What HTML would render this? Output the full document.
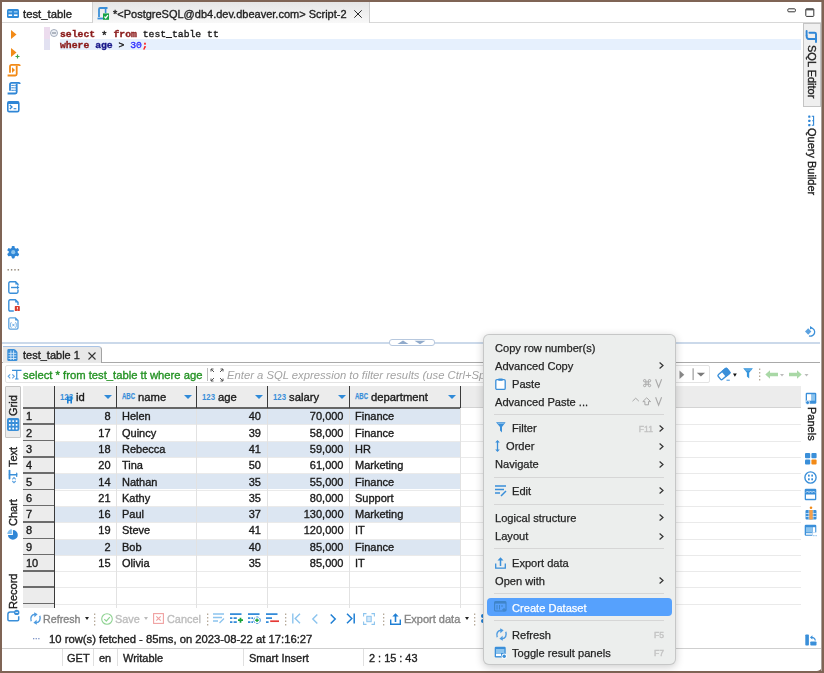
<!DOCTYPE html>
<html><head><meta charset="utf-8">
<style>
*{margin:0;padding:0;box-sizing:border-box}
html,body{width:824px;height:673px;overflow:hidden;background:#7f6455}
body{position:relative;font-family:"Liberation Sans",sans-serif;font-size:11px;color:#1f1f1f}
.a{position:absolute}
.t{position:absolute;white-space:nowrap;line-height:1}
svg{position:absolute;overflow:visible}
.mono{font-family:"Liberation Mono",monospace}
.vr{transform-origin:0 0;transform:rotate(90deg)}
.vl{transform-origin:0 0;transform:rotate(-90deg)}
.t,.mi,.sc{will-change:transform;-webkit-text-stroke:0.35px currentColor}
.ph{-webkit-text-stroke:0 !important}
.mi{-webkit-text-stroke:0.25px currentColor}
.g{font-size:11.25px}
.r{text-align:right}
.mi{position:absolute;white-space:nowrap;line-height:1;font-size:11.1px;color:#222}
.sc{position:absolute;white-space:nowrap;line-height:1;font-size:10.5px;color:#b4b4b4;text-align:right}
</style></head><body>
<div class="a" style="left:2px;top:2px;width:820px;height:669px;background:#fff;border-bottom-right-radius:5px"></div>
<!-- ===== TOP TAB BAR ===== -->
<div class="a" style="left:2px;top:22px;width:820px;height:1px;background:#d8d8d8"></div>
<div class="a" style="left:92px;top:2px;width:1px;height:21px;background:#d0d0d0"></div>
<div class="a" style="left:93px;top:2px;width:275.5px;height:21px;background:linear-gradient(#e6e6e6,#f8f8f8)"></div>
<div class="a" style="left:368.5px;top:2px;width:1px;height:21px;background:#cdcdcd"></div>
<svg style="left:7px;top:9px" width="12" height="9" viewBox="0 0 12 9"><rect x="0" y="0" width="12" height="9" rx="1.5" fill="#2f8ad8"/><rect x="1.5" y="2" width="3.6" height="1.6" fill="#8cc4ee"/><rect x="6.9" y="2" width="3.6" height="1.6" fill="#8cc4ee"/><rect x="1.5" y="5.4" width="3.6" height="1.6" fill="#fff"/><rect x="6.9" y="5.4" width="3.6" height="1.6" fill="#fff"/></svg>
<div class="t" style="left:22.5px;top:8.5px;font-size:11.3px">test_table</div>
<svg style="left:97px;top:7px" width="12" height="13" viewBox="0 0 12 13"><path d="M2 10V2.2Q2 1 3.2 1H10.5" stroke="#3a8fd9" stroke-width="1.8" fill="none"/><path d="M8.6 1.5V6" stroke="#3a8fd9" stroke-width="1.6"/><path d="M0.5 11.5H6" stroke="#3a8fd9" stroke-width="1.8"/><rect x="6" y="6.4" width="6" height="6.4" fill="#17a245"/><path d="M7.4 9.6l1.3 1.3 2.2-2.8" stroke="#fff" stroke-width="1.3" fill="none"/></svg>
<div class="t" style="left:113px;top:8.5px">*&lt;PostgreSQL@db4.dev.dbeaver.com&gt; Script-2</div>
<svg style="left:354px;top:10px" width="8" height="8" viewBox="0 0 8 8"><path d="M0.3 0.3l7.4 7.4M7.7 0.3l-7.4 7.4" stroke="#2a2a2a" stroke-width="1"/></svg>
<!-- min / max -->
<svg style="left:787px;top:8px" width="28" height="10" viewBox="0 0 28 10"><rect x="0.8" y="0.8" width="7.6" height="3" rx="1" stroke="#333" stroke-width="1" fill="#fff"/><rect x="18.8" y="0.8" width="8" height="7.6" rx="0.8" stroke="#333" stroke-width="1" fill="#fff"/><rect x="18.8" y="0.8" width="8" height="1.6" fill="#555"/></svg>

<!-- ===== EDITOR ===== -->
<div id="editor"></div>
<!-- left icons -->
<svg style="left:11px;top:30px" width="6" height="9" viewBox="0 0 6 9"><path d="M0 0L5.5 4.5L0 9Z" fill="#f28a17"/></svg>
<svg style="left:11px;top:48px" width="9" height="11" viewBox="0 0 9 11"><path d="M0 0L5.5 4.5L0 9Z" fill="#f28a17"/><path d="M6.5 6.5v4M4.5 8.5h4" stroke="#43a047" stroke-width="1.2"/></svg>
<svg style="left:7px;top:64px" width="14" height="13" viewBox="0 0 14 13"><g stroke="#f28a17" stroke-width="1.8" fill="none"><path d="M3 8.8V2.4Q3 0.9 4.5 0.9H11.8Q12.8 0.9 12.8 2"/><path d="M9.7 1.7V10Q9.7 11.5 8.2 11.5H0.6"/></g><path d="M5 3.2L8 6.1L5 9Z" fill="#f28a17"/></svg>
<svg style="left:7px;top:82px" width="14" height="13" viewBox="0 0 14 13"><g stroke="#2f86d6" stroke-width="1.8" fill="none"><path d="M3 8.8V2.4Q3 0.9 4.5 0.9H11.8Q12.8 0.9 12.8 2"/><path d="M9.7 1.7V10Q9.7 11.5 8.2 11.5H0.6"/></g><g stroke="#2f86d6" stroke-width="1"><path d="M4.3 3.4H6.9M4.3 5.8H6.9M4.3 8.3H6.9"/></g><g fill="#2f86d6"><rect x="7.4" y="2.8" width="1.3" height="1.3"/><rect x="7.4" y="5.2" width="1.3" height="1.3"/><rect x="7.4" y="7.7" width="1.3" height="1.3"/></g></svg>
<svg style="left:7.4px;top:100.8px" width="13" height="12" viewBox="0 0 13 12"><rect x="0.8" y="0.8" width="11" height="9.8" rx="1.4" stroke="#2f86d6" stroke-width="1.6" fill="none"/><rect x="0.8" y="0.6" width="11" height="2.4" fill="#2f86d6"/><path d="M2.8 4L5 6L2.8 8" stroke="#2f86d6" stroke-width="1.3" fill="none"/><path d="M6.6 7.7H9.3" stroke="#2f86d6" stroke-width="1.1"/></svg>
<!-- lower left icons -->
<svg style="left:7px;top:246.2px" width="13" height="13" viewBox="0 0 13 13"><g fill="#2f86d6"><circle cx="6.2" cy="6.2" r="4.5"/><rect x="4.7" y="0" width="3" height="12.4" rx="0.8"/><rect x="4.7" y="0" width="3" height="12.4" rx="0.8" transform="rotate(60 6.2 6.2)"/><rect x="4.7" y="0" width="3" height="12.4" rx="0.8" transform="rotate(120 6.2 6.2)"/></g><circle cx="6.2" cy="6.2" r="2.1" fill="#8cc4ee"/></svg>
<svg style="left:7px;top:269px" width="13" height="2" viewBox="0 0 13 2"><g fill="#9a8f80"><rect x="0.5" y="0" width="1.4" height="1.6"/><rect x="3.9" y="0" width="1.4" height="1.6"/><rect x="7.3" y="0" width="1.4" height="1.6"/><rect x="10.7" y="0" width="1.4" height="1.6"/></g></svg>
<svg style="left:8px;top:280.5px" width="12" height="13" viewBox="0 0 12 13"><path d="M10 4.5V3.2L7.6 0.8H2.2Q0.8 0.8 0.8 2.2V10.8Q0.8 12.2 2.2 12.2H8.6Q10 12.2 10 10.8V8.5" stroke="#3a8fd9" stroke-width="1.4" fill="none"/><path d="M7.4 0.8V3.4H10" fill="#3a8fd9"/><path d="M3 6.5H9.5" stroke="#3a8fd9" stroke-width="1.4"/><path d="M9 4.6L11.4 6.5L9 8.4Z" fill="#3a8fd9"/></svg>
<svg style="left:8px;top:298.5px" width="12" height="13" viewBox="0 0 12 13"><path d="M5.8 12H2.2Q0.8 12 0.8 10.6V2.2Q0.8 0.8 2.2 0.8H7.4L10 3.4V6" stroke="#3a8fd9" stroke-width="1.4" fill="none"/><path d="M7.2 0.8V3.6H10Z" fill="#3a8fd9"/><rect x="6.8" y="7.1" width="5" height="5" rx="0.6" fill="#d93a2b"/><rect x="8.9" y="8" width="0.9" height="2" fill="#fff"/><rect x="8.9" y="10.6" width="0.9" height="0.8" fill="#fff"/></svg>
<svg style="left:8px;top:316.5px" width="12" height="13" viewBox="0 0 12 13"><path d="M10 3.4L7.4 0.8H2.2Q0.8 0.8 0.8 2.2V10.8Q0.8 12.2 2.2 12.2H8.6Q10 12.2 10 10.8Z" stroke="#5ca2e0" stroke-width="1.3" fill="none"/><path d="M7.2 0.8V3.6H10Z" fill="#3a8fd9"/><path d="M3.5 5.5Q2.6 5.5 2.6 6.7V7.4L2 8L2.6 8.6V9.4Q2.6 10.5 3.5 10.5M7.3 5.5Q8.2 5.5 8.2 6.7V7.4L8.8 8L8.2 8.6V9.4Q8.2 10.5 7.3 10.5M4.4 6.8L6.4 9.3M6.4 6.8L4.4 9.3" stroke="#5ca2e0" stroke-width="0.9" fill="none"/></svg>

<!-- ruler bars -->
<div class="a" style="left:44px;top:27px;width:6px;height:12px;background:#ecdcee"></div>
<div class="a" style="left:44px;top:39px;width:6px;height:11px;background:#e2e1f1"></div>
<svg style="left:50px;top:29px" width="8" height="8" viewBox="0 0 8 8"><circle cx="4" cy="4" r="3.5" fill="#eef1f6" stroke="#9aa4b4" stroke-width="0.9"/><path d="M2 4h4" stroke="#707a8a" stroke-width="1"/></svg>
<!-- current line -->
<div class="a" style="left:60px;top:39px;width:741px;height:11px;background:#e6f0fd"></div>
<div class="t mono" style="left:60px;top:28.5px;font-size:9.75px;line-height:11px;color:#1a1a1a"><b style="color:#8a1a1a">select</b> <span style="position:relative;top:2.2px;font-size:11px;line-height:0">*</span> <b style="color:#8a1a1a">from</b> test_table tt</div>
<div class="t mono" style="left:60px;top:39.5px;font-size:9.75px;line-height:11px;color:#1a1a1a"><b style="color:#8a1a1a">where</b> <b style="color:#1a1a8a">age</b> &gt; <span style="color:#3030ff">30</span><b style="color:#ff1a1a">;</b></div>

<!-- SQL Editor vertical tab -->
<div class="a" style="left:803px;top:23px;width:17.5px;height:84px;background:#efefef;border:1px solid #c4c4c4"></div>
<svg style="left:805px;top:30px" width="13" height="13" viewBox="0 0 13 13"><g stroke="#2f86d6" stroke-width="1.9" fill="none" stroke-linecap="round"><path d="M1.6 1V5.3"/><path d="M1.6 5.8Q1.6 9 3.8 9H11"/><path d="M4.4 2.7H9.6Q11 2.7 11 4.1V12"/></g></svg>
<div class="t vr" style="left:817px;top:44.5px">SQL Editor</div>
<svg style="left:808px;top:114.5px" width="7" height="11" viewBox="0 0 7 11"><g fill="#2f86d6"><rect x="0.2" y="0.5" width="2.2" height="2.2" rx="0.4"/><rect x="0.2" y="4.8" width="2.2" height="2.2" rx="0.4"/><rect x="0.2" y="9" width="2.2" height="2.2" rx="0.4"/></g><path d="M3.8 1.2H5.6V10.2H3.8M4.2 5.7H5.6" stroke="#2f86d6" stroke-width="1.1" fill="none"/></svg>
<div class="t vr" style="left:817px;top:127.5px">Query Builder</div>
<svg style="left:805px;top:326px" width="12" height="12" viewBox="0 0 12 12"><path d="M0 5.5L3.2 2.3L6.4 5.5L3.2 8.7Z" fill="#5ca2e0"/><path d="M6 1.8A4.2 4.2 0 1 1 4 9.9" stroke="#3a8fd9" stroke-width="1.3" fill="none"/><path d="M5 0L7.6 1.8L5 3.5Z" fill="#3a8fd9"/></svg>

<!-- ===== SASH ===== -->
<div class="a" style="left:2px;top:342px;width:818px;height:1.5px;background:#cbd9ea"></div>
<div class="a" style="left:389px;top:339px;width:46px;height:7px;background:#fff;border:1px solid #b7c8de;border-radius:3px"></div>
<svg style="left:397px;top:340px" width="30" height="5" viewBox="0 0 30 5"><path d="M0.5 4L6 0.5L11.5 4Z" fill="#90aacb"/><path d="M17.5 0.8L23 4.2L28.5 0.8Z" fill="#90aacb"/></svg>

<!-- ===== RESULTS TAB ===== -->
<div class="a" style="left:2px;top:361.8px;width:818px;height:1px;background:#a9a9a9"></div>
<div class="a" style="left:3px;top:346px;width:99px;height:16.8px;background:#e8e8e8;border-top:1px solid #a9c4e6;border-right:1px solid #a3a3a3;border-top-right-radius:4px"></div>
<svg style="left:7.2px;top:348.6px" width="11" height="12" viewBox="0 0 11 12"><path d="M0.3 1.4Q0.3 0 1.6 0H6.8Q7.6 0 8.2 0.6L9.9 2.3Q10.5 2.9 10.5 3.7V10.7Q10.5 12 9.2 12H1.6Q0.3 12 0.3 10.7Z" fill="#3a8fd9"/><g stroke="#d6eafb" stroke-width="0.9"><path d="M1.5 4.3H9.3M1.5 6.9H9.3M1.5 9.5H9.3M3.9 1.5V11M6.6 1.5V11"/></g></svg>
<div class="t" style="left:22.5px;top:350px">test_table 1</div>
<svg style="left:88px;top:352px" width="8" height="8" viewBox="0 0 8 8"><path d="M0.5 0.5l7 7M7.5 0.5l-7 7" stroke="#333" stroke-width="1.1"/></svg>

<!-- ===== FILTER BAR ===== -->
<div class="a" style="left:5px;top:365.3px;width:705px;height:17.5px;background:#fff;border:1px solid #e3e3e3;border-radius:2px"></div>
<svg style="left:7px;top:369.5px" width="15" height="10" viewBox="0 0 15 10"><path d="M3.2 4.3L1.2 6.3L3.2 8.3M5.3 4.3L7.3 6.3L5.3 8.3" stroke="#5ca2e0" stroke-width="1.1" fill="none"/><path d="M5.6 1.1V0.4H13.9V1.1M9.75 0.4V9M8 9H11.5" stroke="#3a8fd9" stroke-width="1.2" fill="none"/></svg>

<div class="t" style="left:23px;top:369.8px;font-size:11.25px;color:#259325">select * from test_table tt where age</div>
<div class="a" style="left:207px;top:368px;width:1px;height:13px;background:#bbb"></div>
<svg style="left:210px;top:368px" width="14" height="14" viewBox="0 0 14 14"><path d="M1 1l3 3M1 1v2.5M1 1h2.5M13 1l-3 3M13 1v2.5M13 1h-2.5M1 13l3-3M1 13v-2.5M1 13h2.5M13 13l-3-3M13 13v-2.5M13 13h-2.5" stroke="#555" stroke-width="1" fill="none"/></svg>
<div class="t ph" style="left:226.5px;top:369.8px;font-size:11.25px;font-style:italic;color:#a3a3a3">Enter a SQL expression to filter results (use Ctrl+Space)</div>
<div class="a" style="left:22.7px;top:386.0px;width:778.8px;height:21.600000000000023px;background:#ececec;"></div>
<div class="a" style="left:22.7px;top:407.6px;width:31.599999999999998px;height:200.79999999999995px;background:#ececec;"></div>
<div class="a" style="left:54.8px;top:408.6px;width:405.59999999999997px;height:15.700000000000001px;background:#dce6f2;"></div>
<div class="a" style="left:54.8px;top:441.20000000000005px;width:405.59999999999997px;height:15.700000000000001px;background:#dce6f2;"></div>
<div class="a" style="left:54.8px;top:473.8px;width:405.59999999999997px;height:15.700000000000001px;background:#dce6f2;"></div>
<div class="a" style="left:54.8px;top:506.40000000000003px;width:405.59999999999997px;height:15.700000000000001px;background:#dce6f2;"></div>
<div class="a" style="left:54.8px;top:539.0px;width:405.59999999999997px;height:15.700000000000001px;background:#dce6f2;"></div>
<div class="a" style="left:54.8px;top:424.40000000000003px;width:746.7px;height:0.7px;background:#eaeaea;"></div>
<div class="a" style="left:54.8px;top:440.70000000000005px;width:746.7px;height:0.7px;background:#eaeaea;"></div>
<div class="a" style="left:54.8px;top:457.0px;width:746.7px;height:0.7px;background:#eaeaea;"></div>
<div class="a" style="left:54.8px;top:473.3px;width:746.7px;height:0.7px;background:#eaeaea;"></div>
<div class="a" style="left:54.8px;top:489.6px;width:746.7px;height:0.7px;background:#eaeaea;"></div>
<div class="a" style="left:54.8px;top:505.90000000000003px;width:746.7px;height:0.7px;background:#eaeaea;"></div>
<div class="a" style="left:54.8px;top:522.2px;width:746.7px;height:0.7px;background:#eaeaea;"></div>
<div class="a" style="left:54.8px;top:538.5px;width:746.7px;height:0.7px;background:#eaeaea;"></div>
<div class="a" style="left:54.8px;top:554.8000000000001px;width:746.7px;height:0.7px;background:#eaeaea;"></div>
<div class="a" style="left:54.8px;top:571.1px;width:746.7px;height:0.7px;background:#eaeaea;"></div>
<div class="a" style="left:54.8px;top:587.4000000000001px;width:746.7px;height:0.7px;background:#eaeaea;"></div>
<div class="a" style="left:54.8px;top:603.7px;width:746.7px;height:0.7px;background:#eaeaea;"></div>
<div class="a" style="left:116.1px;top:407.6px;width:0.8px;height:200.79999999999995px;background:#e2e2e2;"></div>
<div class="a" style="left:196.2px;top:407.6px;width:0.8px;height:200.79999999999995px;background:#e2e2e2;"></div>
<div class="a" style="left:267.2px;top:407.6px;width:0.8px;height:200.79999999999995px;background:#e2e2e2;"></div>
<div class="a" style="left:349.2px;top:407.6px;width:0.8px;height:200.79999999999995px;background:#e2e2e2;"></div>
<div class="a" style="left:459.9px;top:407.6px;width:0.8px;height:200.79999999999995px;background:#e2e2e2;"></div>
<div class="a" style="left:22.7px;top:423.40000000000003px;width:31.599999999999998px;height:1.5px;background:#6c6c6c;"></div>
<div class="a" style="left:22.7px;top:439.70000000000005px;width:31.599999999999998px;height:1.5px;background:#6c6c6c;"></div>
<div class="a" style="left:22.7px;top:456.0px;width:31.599999999999998px;height:1.5px;background:#6c6c6c;"></div>
<div class="a" style="left:22.7px;top:472.3px;width:31.599999999999998px;height:1.5px;background:#6c6c6c;"></div>
<div class="a" style="left:22.7px;top:488.6px;width:31.599999999999998px;height:1.5px;background:#6c6c6c;"></div>
<div class="a" style="left:22.7px;top:504.90000000000003px;width:31.599999999999998px;height:1.5px;background:#6c6c6c;"></div>
<div class="a" style="left:22.7px;top:521.2px;width:31.599999999999998px;height:1.5px;background:#6c6c6c;"></div>
<div class="a" style="left:22.7px;top:537.5px;width:31.599999999999998px;height:1.5px;background:#6c6c6c;"></div>
<div class="a" style="left:22.7px;top:553.8000000000001px;width:31.599999999999998px;height:1.5px;background:#6c6c6c;"></div>
<div class="a" style="left:22.7px;top:570.1px;width:31.599999999999998px;height:1.5px;background:#6c6c6c;"></div>
<div class="a" style="left:22.7px;top:586.4000000000001px;width:31.599999999999998px;height:1.5px;background:#6c6c6c;"></div>
<div class="a" style="left:22.7px;top:602.7px;width:31.599999999999998px;height:1.5px;background:#6c6c6c;"></div>
<div class="a" style="left:22.7px;top:407.1px;width:437.7px;height:1.5px;background:#666666;"></div>
<div class="a" style="left:460.4px;top:407.20000000000005px;width:341.1px;height:1.0px;background:#d4d4d4;"></div>
<div class="a" style="left:53.699999999999996px;top:386.0px;width:1.3px;height:22.100000000000023px;background:#3a3a3a;"></div>
<div class="a" style="left:116.0px;top:386.0px;width:1.3px;height:22.100000000000023px;background:#3a3a3a;"></div>
<div class="a" style="left:196.1px;top:386.0px;width:1.3px;height:22.100000000000023px;background:#3a3a3a;"></div>
<div class="a" style="left:267.09999999999997px;top:386.0px;width:1.3px;height:22.100000000000023px;background:#3a3a3a;"></div>
<div class="a" style="left:349.09999999999997px;top:386.0px;width:1.3px;height:22.100000000000023px;background:#3a3a3a;"></div>
<div class="a" style="left:459.79999999999995px;top:386.0px;width:1.3px;height:22.100000000000023px;background:#3a3a3a;"></div>
<div class="a" style="left:53.699999999999996px;top:407.6px;width:1.3px;height:200.79999999999995px;background:#3a3a3a;"></div>
<svg style="left:60.1px;top:392.6px" width="13" height="7" viewBox="0 0 13 7"><text x="0" y="6.9" font-family="Liberation Sans" font-weight="bold" font-size="8.6" fill="#3a8fd9" textLength="13" lengthAdjust="spacingAndGlyphs">123</text></svg>
<div class="t" style="left:75.8px;top:392.4px;font-size:11.25px;color:#1a1a1a">id</div>
<svg style="left:104.4px;top:394.6px" width="8" height="4" viewBox="0 0 8 4"><path d="M0 0H8L4 4Z" fill="#2f8ad8"/></svg>
<svg style="left:122.1px;top:393px" width="13" height="6" viewBox="0 0 13 6"><text x="0" y="6.1" font-family="Liberation Sans" font-weight="bold" font-size="8.7" fill="#3a8fd9" stroke="#3a8fd9" stroke-width="0.25" textLength="13" lengthAdjust="spacingAndGlyphs">ABC</text></svg>
<div class="t" style="left:137.8px;top:392.4px;font-size:11.25px;color:#1a1a1a">name</div>
<svg style="left:184.0px;top:394.6px" width="8" height="4" viewBox="0 0 8 4"><path d="M0 0H8L4 4Z" fill="#2f8ad8"/></svg>
<svg style="left:202.0px;top:392.6px" width="13" height="7" viewBox="0 0 13 7"><text x="0" y="6.9" font-family="Liberation Sans" font-weight="bold" font-size="8.6" fill="#3a8fd9" textLength="13" lengthAdjust="spacingAndGlyphs">123</text></svg>
<div class="t" style="left:217.8px;top:392.4px;font-size:11.25px;color:#1a1a1a">age</div>
<svg style="left:255.0px;top:394.6px" width="8" height="4" viewBox="0 0 8 4"><path d="M0 0H8L4 4Z" fill="#2f8ad8"/></svg>
<svg style="left:273.0px;top:392.6px" width="13" height="7" viewBox="0 0 13 7"><text x="0" y="6.9" font-family="Liberation Sans" font-weight="bold" font-size="8.6" fill="#3a8fd9" textLength="13" lengthAdjust="spacingAndGlyphs">123</text></svg>
<div class="t" style="left:288.6px;top:392.4px;font-size:11.25px;color:#1a1a1a">salary</div>
<svg style="left:337.6px;top:394.6px" width="8" height="4" viewBox="0 0 8 4"><path d="M0 0H8L4 4Z" fill="#2f8ad8"/></svg>
<svg style="left:355.0px;top:393px" width="13" height="6" viewBox="0 0 13 6"><text x="0" y="6.1" font-family="Liberation Sans" font-weight="bold" font-size="8.7" fill="#3a8fd9" stroke="#3a8fd9" stroke-width="0.25" textLength="13" lengthAdjust="spacingAndGlyphs">ABC</text></svg>
<div class="t" style="left:371.0px;top:392.4px;font-size:11.25px;color:#1a1a1a">department</div>
<svg style="left:447.8px;top:394.6px" width="8" height="4" viewBox="0 0 8 4"><path d="M0 0H8L4 4Z" fill="#2f8ad8"/></svg>
<svg style="left:66px;top:396px" width="7" height="8" viewBox="0 0 7 8"><path d="M1 0.5H6V7.5H4.4V5H2.6V7.5H1Z" fill="#1c7fd4"/><rect x="2.6" y="1.6" width="1.8" height="2" fill="#8cc4ee"/></svg>
<div class="t" style="left:26px;top:411.3px;font-size:11px;color:#1a1a1a">1</div>
<div class="t" style="left:0px;top:411.3px;font-size:11px;width:110.6px;text-align:right;color:#1a1a1a">8</div>
<div class="t" style="left:121.9px;top:411.3px;font-size:11px;color:#1a1a1a">Helen</div>
<div class="t" style="left:0px;top:411.3px;font-size:11px;width:261px;text-align:right;color:#1a1a1a">40</div>
<div class="t" style="left:0px;top:411.3px;font-size:11px;width:343.5px;text-align:right;color:#1a1a1a">70,000</div>
<div class="t" style="left:354.8px;top:411.3px;font-size:11px;color:#1a1a1a">Finance</div>
<div class="t" style="left:26px;top:427.6px;font-size:11px;color:#1a1a1a">2</div>
<div class="t" style="left:0px;top:427.6px;font-size:11px;width:110.6px;text-align:right;color:#1a1a1a">17</div>
<div class="t" style="left:121.9px;top:427.6px;font-size:11px;color:#1a1a1a">Quincy</div>
<div class="t" style="left:0px;top:427.6px;font-size:11px;width:261px;text-align:right;color:#1a1a1a">39</div>
<div class="t" style="left:0px;top:427.6px;font-size:11px;width:343.5px;text-align:right;color:#1a1a1a">58,000</div>
<div class="t" style="left:354.8px;top:427.6px;font-size:11px;color:#1a1a1a">Finance</div>
<div class="t" style="left:26px;top:443.90000000000003px;font-size:11px;color:#1a1a1a">3</div>
<div class="t" style="left:0px;top:443.90000000000003px;font-size:11px;width:110.6px;text-align:right;color:#1a1a1a">18</div>
<div class="t" style="left:121.9px;top:443.90000000000003px;font-size:11px;color:#1a1a1a">Rebecca</div>
<div class="t" style="left:0px;top:443.90000000000003px;font-size:11px;width:261px;text-align:right;color:#1a1a1a">41</div>
<div class="t" style="left:0px;top:443.90000000000003px;font-size:11px;width:343.5px;text-align:right;color:#1a1a1a">59,000</div>
<div class="t" style="left:354.8px;top:443.90000000000003px;font-size:11px;color:#1a1a1a">HR</div>
<div class="t" style="left:26px;top:460.2px;font-size:11px;color:#1a1a1a">4</div>
<div class="t" style="left:0px;top:460.2px;font-size:11px;width:110.6px;text-align:right;color:#1a1a1a">20</div>
<div class="t" style="left:121.9px;top:460.2px;font-size:11px;color:#1a1a1a">Tina</div>
<div class="t" style="left:0px;top:460.2px;font-size:11px;width:261px;text-align:right;color:#1a1a1a">50</div>
<div class="t" style="left:0px;top:460.2px;font-size:11px;width:343.5px;text-align:right;color:#1a1a1a">61,000</div>
<div class="t" style="left:354.8px;top:460.2px;font-size:11px;color:#1a1a1a">Marketing</div>
<div class="t" style="left:26px;top:476.5px;font-size:11px;color:#1a1a1a">5</div>
<div class="t" style="left:0px;top:476.5px;font-size:11px;width:110.6px;text-align:right;color:#1a1a1a">14</div>
<div class="t" style="left:121.9px;top:476.5px;font-size:11px;color:#1a1a1a">Nathan</div>
<div class="t" style="left:0px;top:476.5px;font-size:11px;width:261px;text-align:right;color:#1a1a1a">35</div>
<div class="t" style="left:0px;top:476.5px;font-size:11px;width:343.5px;text-align:right;color:#1a1a1a">55,000</div>
<div class="t" style="left:354.8px;top:476.5px;font-size:11px;color:#1a1a1a">Finance</div>
<div class="t" style="left:26px;top:492.8px;font-size:11px;color:#1a1a1a">6</div>
<div class="t" style="left:0px;top:492.8px;font-size:11px;width:110.6px;text-align:right;color:#1a1a1a">21</div>
<div class="t" style="left:121.9px;top:492.8px;font-size:11px;color:#1a1a1a">Kathy</div>
<div class="t" style="left:0px;top:492.8px;font-size:11px;width:261px;text-align:right;color:#1a1a1a">35</div>
<div class="t" style="left:0px;top:492.8px;font-size:11px;width:343.5px;text-align:right;color:#1a1a1a">80,000</div>
<div class="t" style="left:354.8px;top:492.8px;font-size:11px;color:#1a1a1a">Support</div>
<div class="t" style="left:26px;top:509.1px;font-size:11px;color:#1a1a1a">7</div>
<div class="t" style="left:0px;top:509.1px;font-size:11px;width:110.6px;text-align:right;color:#1a1a1a">16</div>
<div class="t" style="left:121.9px;top:509.1px;font-size:11px;color:#1a1a1a">Paul</div>
<div class="t" style="left:0px;top:509.1px;font-size:11px;width:261px;text-align:right;color:#1a1a1a">37</div>
<div class="t" style="left:0px;top:509.1px;font-size:11px;width:343.5px;text-align:right;color:#1a1a1a">130,000</div>
<div class="t" style="left:354.8px;top:509.1px;font-size:11px;color:#1a1a1a">Marketing</div>
<div class="t" style="left:26px;top:525.4000000000001px;font-size:11px;color:#1a1a1a">8</div>
<div class="t" style="left:0px;top:525.4000000000001px;font-size:11px;width:110.6px;text-align:right;color:#1a1a1a">19</div>
<div class="t" style="left:121.9px;top:525.4000000000001px;font-size:11px;color:#1a1a1a">Steve</div>
<div class="t" style="left:0px;top:525.4000000000001px;font-size:11px;width:261px;text-align:right;color:#1a1a1a">41</div>
<div class="t" style="left:0px;top:525.4000000000001px;font-size:11px;width:343.5px;text-align:right;color:#1a1a1a">120,000</div>
<div class="t" style="left:354.8px;top:525.4000000000001px;font-size:11px;color:#1a1a1a">IT</div>
<div class="t" style="left:26px;top:541.7px;font-size:11px;color:#1a1a1a">9</div>
<div class="t" style="left:0px;top:541.7px;font-size:11px;width:110.6px;text-align:right;color:#1a1a1a">2</div>
<div class="t" style="left:121.9px;top:541.7px;font-size:11px;color:#1a1a1a">Bob</div>
<div class="t" style="left:0px;top:541.7px;font-size:11px;width:261px;text-align:right;color:#1a1a1a">40</div>
<div class="t" style="left:0px;top:541.7px;font-size:11px;width:343.5px;text-align:right;color:#1a1a1a">85,000</div>
<div class="t" style="left:354.8px;top:541.7px;font-size:11px;color:#1a1a1a">Finance</div>
<div class="t" style="left:26px;top:558.0000000000001px;font-size:11px;color:#1a1a1a">10</div>
<div class="t" style="left:0px;top:558.0000000000001px;font-size:11px;width:110.6px;text-align:right;color:#1a1a1a">15</div>
<div class="t" style="left:121.9px;top:558.0000000000001px;font-size:11px;color:#1a1a1a">Olivia</div>
<div class="t" style="left:0px;top:558.0000000000001px;font-size:11px;width:261px;text-align:right;color:#1a1a1a">35</div>
<div class="t" style="left:0px;top:558.0000000000001px;font-size:11px;width:343.5px;text-align:right;color:#1a1a1a">85,000</div>
<div class="t" style="left:354.8px;top:558.0000000000001px;font-size:11px;color:#1a1a1a">IT</div>
<div class="a" style="left:5px;top:386px;width:16px;height:51.5px;background:#ececec;border:1px solid #c6c6c6;border-radius:1px"></div>
<div class="t vl" style="left:7.5px;top:415.6px;font-size:11.0px">Grid</div>
<svg style="left:6.6px;top:418px" width="13" height="13" viewBox="0 0 13 13"><rect x="0" y="0" width="12.4" height="13" rx="2" fill="#3a8fd9"/><g fill="#fff"><rect x="1.9" y="2.2" width="1.8" height="1.8" rx="0.4"/><rect x="5.3" y="2.2" width="1.8" height="1.8" rx="0.4"/><rect x="8.7" y="2.2" width="1.8" height="1.8" rx="0.4"/><rect x="1.9" y="5.9" width="1.8" height="1.8" rx="0.4"/><rect x="5.3" y="5.9" width="1.8" height="1.8" rx="0.4"/><rect x="8.7" y="5.9" width="1.8" height="1.8" rx="0.4"/><rect x="1.9" y="9.6" width="1.8" height="1.8" rx="0.4"/><rect x="5.3" y="9.6" width="1.8" height="1.8" rx="0.4"/><rect x="8.7" y="9.6" width="1.8" height="1.8" rx="0.4"/></g></svg>
<div class="t vl" style="left:7.5px;top:467.0px;font-size:11.0px">Text</div>
<svg style="left:8px;top:470px" width="10" height="14" viewBox="0 0 10 14"><g stroke="#3a8fd9" fill="none" stroke-linecap="round"><path d="M1.5 0.6V8.6" stroke-width="1.8"/><path d="M1.5 4.8H8.6" stroke-width="1.6"/><path d="M8.7 3.2V6.4" stroke-width="1.2"/></g><g stroke="#5ca2e0" stroke-width="1.1" fill="none"><path d="M4.3 9.3L6 7.6L7.7 9.3M4.3 11L6 12.7L7.7 11"/></g></svg>
<div class="t vl" style="left:7.5px;top:526.0px;font-size:11.0px">Chart</div>
<svg style="left:7px;top:529px" width="12" height="12" viewBox="0 0 12 12"><path d="M5.9 5.9V1A4.9 4.9 0 1 1 1 5.9Z" fill="#2f86d6"/><path d="M4.9 4.9V0.3A4.6 4.6 0 0 0 0.3 4.9Z" fill="#7fbdee"/></svg>
<div class="t vl" style="left:7.5px;top:608.5px;font-size:11.0px">Record</div>
<svg style="left:6.6px;top:609px" width="13" height="13" viewBox="0 0 13 13"><path d="M7.5 2.9H3.3Q0.9 2.9 0.9 5.3V10.6Q0.9 11.8 2.1 11.8H10.5Q11.7 11.8 11.7 10.6V7.2" stroke="#3a8fd9" stroke-width="1.5" fill="none"/><circle cx="9.7" cy="3.4" r="2.7" fill="#3a8fd9"/><path d="M8.4 3.4H11" stroke="#fff" stroke-width="0.9"/></svg>
<svg style="left:805px;top:392px" width="12" height="13" viewBox="0 0 12 13"><rect x="0.7" y="0.7" width="10.6" height="11" rx="1.2" fill="#3a8fd9"/><rect x="2" y="2.2" width="4.5" height="6.5" fill="#fff"/><rect x="6.8" y="2.2" width="3.2" height="6.5" fill="#8cc4ee"/><circle cx="2.6" cy="10.6" r="2" fill="#3a8fd9" stroke="#fff" stroke-width="0.8"/></svg>
<div class="t vr" style="left:817px;top:406.5px;font-size:11px">Panels</div>
<svg style="left:805px;top:453px" width="12" height="12" viewBox="0 0 12 12"><rect x="0" y="0" width="5.2" height="5.2" rx="1" fill="#3a8fd9"/><rect x="6.4" y="0" width="5.2" height="5.2" rx="1" fill="#3a8fd9"/><rect x="0" y="6.4" width="5.2" height="5.2" rx="1" fill="#3a8fd9"/><rect x="6.4" y="6.4" width="5.2" height="5.2" rx="1" fill="#f28a17"/></svg>
<svg style="left:804px;top:470.5px" width="13" height="13" viewBox="0 0 13 13"><circle cx="6.5" cy="6.5" r="5.6" stroke="#3a8fd9" stroke-width="1.4" fill="none"/><g fill="#3a8fd9"><rect x="4" y="3.6" width="1.7" height="2"/><rect x="7.3" y="3.6" width="1.7" height="2"/><rect x="4" y="7.3" width="1.7" height="2"/><rect x="7.3" y="7.3" width="1.7" height="2"/></g></svg>
<svg style="left:804px;top:488px" width="13" height="13" viewBox="0 0 13 13"><rect x="0.7" y="0.7" width="11.6" height="11.6" rx="1.2" fill="#3a8fd9"/><rect x="2" y="6.5" width="9" height="4.3" fill="#fff"/><path d="M2 4.5L3.5 3L5 4.5L6.5 3L8 4.5L9.5 3L11 4.5" stroke="#d6eafb" stroke-width="1" fill="none"/></svg>
<svg style="left:805px;top:506px" width="12" height="14" viewBox="0 0 12 14"><rect x="0.5" y="4" width="11" height="9.5" rx="1" fill="#3a8fd9"/><g stroke="#d6eafb" stroke-width="0.8"><path d="M0.5 7.5H11.5M0.5 10.5H11.5M4 4V13.5M8 4V13.5"/></g><rect x="4.3" y="4" width="3.4" height="9.5" fill="#f5a04a"/><circle cx="6" cy="1.8" r="1.3" fill="#f28a17"/></svg>
<svg style="left:804px;top:524px" width="13" height="13" viewBox="0 0 13 13"><rect x="0.7" y="0.7" width="11.6" height="11" rx="1.2" fill="#3a8fd9"/><rect x="2" y="3.2" width="6" height="5.2" fill="#8cc4ee"/><rect x="8.6" y="3.2" width="2.6" height="5.2" fill="#fff"/><rect x="2" y="9.2" width="6.2" height="1.5" fill="#fff"/><rect x="8.4" y="8.4" width="5" height="5" fill="#fff"/><path d="M9.4 11.7h1M11.6 11.7h1" stroke="#3a8fd9" stroke-width="0.9"/></svg>
<svg style="left:805px;top:634px" width="12" height="12" viewBox="0 0 12 12"><rect x="0.3" y="0.5" width="3.6" height="11" rx="0.8" fill="#3a8fd9"/><rect x="5.3" y="7.5" width="6.2" height="4" rx="0.8" fill="#3a8fd9"/><path d="M6 3.5A3.6 3.6 0 0 1 10.3 6.5" stroke="#3a8fd9" stroke-width="1.3" fill="none"/><path d="M7.4 1.2L5 3.6L7.4 5.6Z" fill="#3a8fd9"/></svg>
<svg style="left:28.6px;top:612px" width="13" height="13" viewBox="0 0 13 13"><g stroke="#4e9be0" stroke-width="1.4" fill="none"><path d="M2.2 9.2C1 5.5 2.6 2.4 6 2.2"/><path d="M10.8 3.8C12 7.5 10.4 10.6 7 10.8"/></g><g fill="#4e9be0"><path d="M5.2 0.2L8.6 2.3L5.4 5.2Z"/><path d="M7.8 12.8L4.4 10.7L7.6 7.8Z"/></g></svg>
<div class="t" style="left:42.6px;top:613.9px;font-size:10.7px;color:#858585">Refresh</div>
<svg style="left:85px;top:617px" width="4" height="3" viewBox="0 0 4 3"><path d="M0 0H4L2 3Z" fill="#222"/></svg>
<svg style="left:94.3px;top:612.5px" width="2" height="13" viewBox="0 0 2 13"><g fill="#b5a999"><rect x="0" y="0.5" width="1.3" height="1.5"/><rect x="0" y="4" width="1.3" height="1.5"/><rect x="0" y="7.5" width="1.3" height="1.5"/><rect x="0" y="11" width="1.3" height="1.5"/></g></svg>
<svg style="left:101px;top:612.6px" width="12" height="12" viewBox="0 0 12 12"><circle cx="6" cy="6" r="5.3" stroke="#8fd392" stroke-width="1.1" fill="none"/><path d="M3.3 6.2L5.3 8.2L8.8 4.2" stroke="#8fd392" stroke-width="1.2" fill="none"/></svg>
<div class="t" style="left:115.2px;top:613.9px;font-size:10.9px;color:#bdbdbd">Save</div>
<svg style="left:144px;top:617px" width="4" height="3" viewBox="0 0 4 3"><path d="M0 0H4L2 3Z" fill="#bbb"/></svg>
<svg style="left:153.4px;top:612.8px" width="11" height="11" viewBox="0 0 11 11"><rect x="0.6" y="0.6" width="9.8" height="9.8" stroke="#f0a0a0" stroke-width="1.1" fill="none"/><path d="M3.3 3.3L7.7 7.7M7.7 3.3L3.3 7.7" stroke="#f0a0a0" stroke-width="1.1"/></svg>
<div class="t" style="left:167.4px;top:613.9px;font-size:10.9px;color:#bdbdbd">Cancel</div>
<svg style="left:206.5px;top:612.5px" width="2" height="13" viewBox="0 0 2 13"><g fill="#b5a999"><rect x="0" y="0.5" width="1.3" height="1.5"/><rect x="0" y="4" width="1.3" height="1.5"/><rect x="0" y="7.5" width="1.3" height="1.5"/><rect x="0" y="11" width="1.3" height="1.5"/></g></svg>
<svg style="left:212.5px;top:613px" width="12" height="11" viewBox="0 0 12 11"><g stroke="#8cc4ee" stroke-width="1.3" fill="none"><path d="M0 1H11M0 4.5H9M0 8H5M6.5 10L11 5.5"/></g></svg>
<svg style="left:230px;top:613px" width="13" height="11" viewBox="0 0 13 11"><g fill="#1f7fd4"><rect x="0" y="0.3" width="11.5" height="1.6"/><rect x="0" y="4.3" width="2.4" height="1.6"/><rect x="3.6" y="4.3" width="3.2" height="1.6"/><rect x="0" y="8.3" width="2.4" height="1.6"/><rect x="3.6" y="8.3" width="3.2" height="1.6"/></g><path d="M8 7.2H13M10.5 4.7V9.7" stroke="#18a33c" stroke-width="1.7"/></svg>
<svg style="left:248px;top:613px" width="13" height="11" viewBox="0 0 13 11"><g fill="#1f7fd4"><rect x="0" y="0.3" width="11.5" height="1.6"/><rect x="0" y="4.3" width="2.4" height="1.6"/><rect x="0" y="8.3" width="2.4" height="1.6"/><rect x="3.4" y="4.3" width="1.6" height="1.6"/><rect x="3.4" y="8.3" width="1.6" height="1.6"/></g><circle cx="9" cy="7.2" r="3.3" stroke="#1f7fd4" stroke-width="0.9" fill="none" stroke-dasharray="2.4 1.2"/><path d="M7.2 7.2H10.8M9 5.4V9" stroke="#18a33c" stroke-width="1.4"/></svg>
<svg style="left:266px;top:613px" width="13" height="11" viewBox="0 0 13 11"><g fill="#1f7fd4"><rect x="0" y="0.3" width="11.5" height="1.6"/><rect x="0" y="4.3" width="6" height="1.6"/><rect x="0" y="8.3" width="2.6" height="1.6"/></g><path d="M4.2 8.2H13" stroke="#e53935" stroke-width="1.7"/></svg>
<svg style="left:285px;top:612.5px" width="2" height="13" viewBox="0 0 2 13"><g fill="#b5a999"><rect x="0" y="0.5" width="1.3" height="1.5"/><rect x="0" y="4" width="1.3" height="1.5"/><rect x="0" y="7.5" width="1.3" height="1.5"/><rect x="0" y="11" width="1.3" height="1.5"/></g></svg>
<svg style="left:292.4px;top:613px" width="9" height="11" viewBox="0 0 9 11"><path d="M0.8 0.5V10.5M8 0.8L3.2 5.5L8 10.2" stroke="#8cc4ee" stroke-width="1.4" fill="none"/></svg>
<svg style="left:312px;top:613.5px" width="6" height="10" viewBox="0 0 6 10"><path d="M5.3 0.5L0.8 5L5.3 9.5" stroke="#8cc4ee" stroke-width="1.4" fill="none"/></svg>
<svg style="left:330px;top:613.5px" width="6" height="10" viewBox="0 0 6 10"><path d="M0.7 0.5L5.2 5L0.7 9.5" stroke="#1f7fd4" stroke-width="1.5" fill="none"/></svg>
<svg style="left:345.6px;top:613px" width="9" height="11" viewBox="0 0 9 11"><path d="M8.2 0.5V10.5M1 0.8L5.8 5.5L1 10.2" stroke="#1f7fd4" stroke-width="1.5" fill="none"/></svg>
<svg style="left:362.8px;top:612.8px" width="12" height="12" viewBox="0 0 12 12"><path d="M0.6 3.5V0.6H3.5M8.5 0.6H11.4V3.5M11.4 8.5V11.4H8.5M3.5 11.4H0.6V8.5" stroke="#8cc4ee" stroke-width="1.1" fill="none"/><rect x="3.8" y="3.3" width="4.4" height="5.4" stroke="#8cc4ee" stroke-width="1" fill="#d6eafb"/></svg>
<svg style="left:383px;top:612.5px" width="2" height="13" viewBox="0 0 2 13"><g fill="#b5a999"><rect x="0" y="0.5" width="1.3" height="1.5"/><rect x="0" y="4" width="1.3" height="1.5"/><rect x="0" y="7.5" width="1.3" height="1.5"/><rect x="0" y="11" width="1.3" height="1.5"/></g></svg>
<svg style="left:389.5px;top:612.5px" width="11" height="12" viewBox="0 0 11 12"><path d="M0.7 6.5V11.2H10.3V6.5" stroke="#1f7fd4" stroke-width="1.4" fill="none"/><path d="M5.5 9V2" stroke="#1f7fd4" stroke-width="1.6"/><path d="M2.3 3.6L5.5 0.2L8.7 3.6Z" fill="#1f7fd4"/></svg>
<div class="t" style="left:403.6px;top:613.9px;font-size:11px;color:#858585">Export data</div>
<svg style="left:465px;top:617px" width="4" height="3" viewBox="0 0 4 3"><path d="M0 0H4L2 3Z" fill="#222"/></svg>
<svg style="left:474px;top:612.5px" width="2" height="13" viewBox="0 0 2 13"><g fill="#b5a999"><rect x="0" y="0.5" width="1.3" height="1.5"/><rect x="0" y="4" width="1.3" height="1.5"/><rect x="0" y="7.5" width="1.3" height="1.5"/><rect x="0" y="11" width="1.3" height="1.5"/></g></svg>
<svg style="left:480px;top:613px" width="6" height="11" viewBox="0 0 6 11"><circle cx="3" cy="3" r="2" fill="#1f7fd4"/><circle cx="3" cy="8" r="2" fill="#1f7fd4"/></svg>
<svg style="left:32.5px;top:637.6px" width="7" height="2" viewBox="0 0 7 2"><g fill="#7f95c7"><rect x="0" y="0" width="1.3" height="1.3"/><rect x="2.6" y="0" width="1.3" height="1.3"/><rect x="5.2" y="0" width="1.3" height="1.3"/></g></svg>
<div class="t" style="left:49.1px;top:633.7px;font-size:11.25px;color:#222">10 row(s) fetched - 85ms, on 2023-08-22 at 17:16:27</div>
<div class="a" style="left:2px;top:648px;width:820px;height:1px;background:#cfcfcf;"></div>
<div class="a" style="left:61.9px;top:649px;width:1px;height:17px;background:#e0e0e0;"></div>
<div class="a" style="left:93.4px;top:649px;width:1px;height:17px;background:#e0e0e0;"></div>
<div class="a" style="left:117.4px;top:649px;width:1px;height:17px;background:#e0e0e0;"></div>
<div class="a" style="left:243.2px;top:649px;width:1px;height:17px;background:#e0e0e0;"></div>
<div class="a" style="left:363.0px;top:649px;width:1px;height:17px;background:#e0e0e0;"></div>
<div class="t" style="left:66.7px;top:653.2px;font-size:11px;color:#222">GET</div>
<div class="t" style="left:99.3px;top:653.2px;font-size:11px;color:#222">en</div>
<div class="t" style="left:123.0px;top:653.2px;font-size:11px;color:#222">Writable</div>
<div class="t" style="left:249.0px;top:653.2px;font-size:11px;color:#222">Smart Insert</div>
<div class="t" style="left:368.8px;top:653.2px;font-size:10.9px;color:#222">2 : 15 : 43</div>
<svg style="left:679px;top:367.5px" width="30" height="13" viewBox="0 0 30 13"><path d="M0.5 2.5L5.3 6.8L0.5 11Z" fill="#8a8a8a"/><rect x="13.6" y="0.3" width="1" height="11.8" fill="#8a8a8a"/><path d="M17.8 4.7H26L21.9 8.5Z" fill="#7a7a7a"/></svg>
<svg style="left:716.5px;top:367.8px" width="21" height="13" viewBox="0 0 21 13"><g transform="rotate(-40 6.8 6)"><rect x="1" y="3" width="11.6" height="6.2" rx="1.4" fill="#fff" stroke="#3a8fd9" stroke-width="1.4"/><rect x="6.6" y="2.3" width="6.7" height="7.6" rx="1.2" fill="#3a8fd9"/></g><path d="M9.5 12.2H12.8" stroke="#3a8fd9" stroke-width="1"/><path d="M16 5.5H19.8L17.9 8.8Z" fill="#111"/></svg>
<svg style="left:742.7px;top:368.4px" width="11" height="11" viewBox="0 0 11 11"><path d="M0.2 0.2H9.9L6.2 4.8V10.5L3.9 8.4V4.8Z" fill="#3595dd"/><path d="M2.3 2H8.3" stroke="#8cc4ee" stroke-width="0.8"/></svg>
<svg style="left:758.5px;top:367.5px" width="2" height="14" viewBox="0 0 2 14"><g fill="#b5a999"><rect x="0" y="0.5" width="1.3" height="1.5"/><rect x="0" y="4" width="1.3" height="1.5"/><rect x="0" y="7.5" width="1.3" height="1.5"/><rect x="0" y="11" width="1.3" height="1.5"/></g></svg>
<svg style="left:764.5px;top:370px" width="20" height="9" viewBox="0 0 20 9"><path d="M0.3 4.5L5 0.3V2.8H13V6.2H5V8.7Z" fill="#a9d8a6"/><path d="M15 4H19L17 6.5Z" fill="#bbb"/></svg>
<svg style="left:788.5px;top:370px" width="20" height="9" viewBox="0 0 20 9"><path d="M12.7 4.5L8 0.3V2.8H0V6.2H8V8.7Z" fill="#a9d8a6"/><path d="M15.5 4H19.5L17.5 6.5Z" fill="#bbb"/></svg>
<div class="a" style="left:482.5px;top:333.5px;width:193.5px;height:331px;background:#eceeed;border:0.5px solid rgba(0,0,0,0.16);border-radius:6px;box-shadow:0 2px 8px rgba(0,0,0,0.2)"></div>
<div class="mi" style="left:494.5px;top:343.0px;color:#242424">Copy row number(s)</div>
<div class="mi" style="left:494.5px;top:360.8px;color:#242424">Advanced Copy</div>
<svg style="left:659px;top:362.3px" width="5" height="7" viewBox="0 0 5 7"><path d="M0.6 0.5L4 3.5L0.6 6.5" stroke="#333" stroke-width="1.2" fill="none"/></svg>
<svg style="left:495px;top:377.6px" width="11" height="12" viewBox="0 0 11 12"><rect x="0.8" y="1.6" width="9.4" height="9.8" rx="1.2" stroke="#3a8fd9" stroke-width="1.3" fill="#fff"/><rect x="3.2" y="0.5" width="4.6" height="2.2" rx="0.6" fill="#3a8fd9"/></svg>
<div class="mi" style="left:512.4px;top:378.70000000000005px;color:#242424">Paste</div>
<svg style="left:643.4px;top:379.20000000000005px" width="20" height="9" viewBox="0 0 20 9"><g stroke="#a9a9a9" stroke-width="1" fill="none"><path d="M2.9 2.9H5.3V5.3H2.9ZM2.9 2.9V1.8A1.2 1.2 0 1 0 1.8 2.9H2.9M5.3 2.9H6.4A1.2 1.2 0 1 0 5.3 1.8V2.9M5.3 5.3V6.4A1.2 1.2 0 1 0 6.4 5.3H5.3M2.9 5.3H1.8A1.2 1.2 0 1 0 2.9 6.4V5.3"/><path d="M12.6 0.3L15.6 8.2L18.6 0.3" stroke-width="1.1"/></g></svg>
<div class="mi" style="left:494.5px;top:396.5px;color:#242424">Advanced Paste ...</div>
<svg style="left:632px;top:397.0px" width="31" height="9" viewBox="0 0 31 9"><g stroke="#a9a9a9" stroke-width="1" fill="none"><path d="M0.5 4.2L3.7 1.2L6.9 4.2"/><path d="M14.7 0.8L10.8 4.6H12.9V7.8H16.5V4.6H18.6Z"/><path d="M23.6 0.3L26.6 8.2L29.6 0.3" stroke-width="1.1"/></g></svg>
<div class="a" style="left:494px;top:413.7px;width:170px;height:1px;background:#d6d6d6;"></div>
<svg style="left:495.5px;top:422.2px" width="10" height="11" viewBox="0 0 10 11"><path d="M0 0.3H9.6L6 5V10.5L4 8.6V5Z" fill="#3a8fd9"/><path d="M1.8 1.5H7.8" stroke="#8cc4ee" stroke-width="0.8"/></svg>
<div class="mi" style="left:512.4px;top:423.3px;color:#242424">Filter</div>
<div class="sc" style="left:592.8px;top:424.9px;width:60px;font-size:8.6px;color:#c2c2c2">F11</div>
<svg style="left:659px;top:424.8px" width="5" height="7" viewBox="0 0 5 7"><path d="M0.6 0.5L4 3.5L0.6 6.5" stroke="#333" stroke-width="1.2" fill="none"/></svg>
<svg style="left:495px;top:440.0px" width="5" height="12" viewBox="0 0 5 12"><path d="M2.5 1.5V10.5" stroke="#3a8fd9" stroke-width="1.3"/><path d="M0.2 2.5L2.5 0L4.8 2.5ZM0.2 9.5L2.5 12L4.8 9.5Z" fill="#3a8fd9"/></svg>
<div class="mi" style="left:505.6px;top:441.1px;color:#242424">Order</div>
<svg style="left:659px;top:442.6px" width="5" height="7" viewBox="0 0 5 7"><path d="M0.6 0.5L4 3.5L0.6 6.5" stroke="#333" stroke-width="1.2" fill="none"/></svg>
<div class="mi" style="left:494.5px;top:459.0px;color:#242424">Navigate</div>
<svg style="left:659px;top:460.5px" width="5" height="7" viewBox="0 0 5 7"><path d="M0.6 0.5L4 3.5L0.6 6.5" stroke="#333" stroke-width="1.2" fill="none"/></svg>
<div class="a" style="left:494px;top:476.9px;width:170px;height:1px;background:#d6d6d6;"></div>
<svg style="left:494.8px;top:484.7px" width="12" height="12" viewBox="0 0 12 12"><g stroke="#3a8fd9" stroke-width="1.5" fill="none"><path d="M0 1H11M0 4.5H9M0 8H5M6 11L11 6"/></g></svg>
<div class="mi" style="left:512.4px;top:485.8px;color:#242424">Edit</div>
<svg style="left:659px;top:487.3px" width="5" height="7" viewBox="0 0 5 7"><path d="M0.6 0.5L4 3.5L0.6 6.5" stroke="#333" stroke-width="1.2" fill="none"/></svg>
<div class="a" style="left:494px;top:503.8px;width:170px;height:1px;background:#d6d6d6;"></div>
<div class="mi" style="left:494.5px;top:512.6px;color:#242424">Logical structure</div>
<svg style="left:659px;top:514.1px" width="5" height="7" viewBox="0 0 5 7"><path d="M0.6 0.5L4 3.5L0.6 6.5" stroke="#333" stroke-width="1.2" fill="none"/></svg>
<div class="mi" style="left:494.5px;top:531.1px;color:#242424">Layout</div>
<svg style="left:659px;top:532.6px" width="5" height="7" viewBox="0 0 5 7"><path d="M0.6 0.5L4 3.5L0.6 6.5" stroke="#333" stroke-width="1.2" fill="none"/></svg>
<div class="a" style="left:494px;top:548.2px;width:170px;height:1px;background:#d6d6d6;"></div>
<svg style="left:494.5px;top:556.5px" width="11" height="12" viewBox="0 0 11 12"><path d="M0.7 6.5V11.2H10.3V6.5" stroke="#3a8fd9" stroke-width="1.3" fill="none"/><path d="M5.5 9V2" stroke="#3a8fd9" stroke-width="1.5"/><path d="M2.5 3.5L5.5 0.3L8.5 3.5Z" fill="#3a8fd9"/></svg>
<div class="mi" style="left:512.4px;top:557.6px;color:#242424">Export data</div>
<div class="mi" style="left:494.5px;top:575.5px;color:#242424">Open with</div>
<svg style="left:659px;top:577.0px" width="5" height="7" viewBox="0 0 5 7"><path d="M0.6 0.5L4 3.5L0.6 6.5" stroke="#333" stroke-width="1.2" fill="none"/></svg>
<div class="a" style="left:494px;top:593.2px;width:170px;height:1px;background:#d6d6d6;"></div>
<div class="a" style="left:486.6px;top:598.3px;width:185.2px;height:17.5px;background:#56a1fd;border-radius:4px"></div>
<svg style="left:494px;top:601.4px" width="13" height="11" viewBox="0 0 13 11"><rect x="0.6" y="0.6" width="11.4" height="9.4" rx="1" stroke="#3f84c8" stroke-width="1.1" fill="none"/><rect x="0.6" y="0.6" width="11.4" height="2" fill="#3f84c8"/><path d="M3 4v4.5M5.5 4v4.5M8 4v2" stroke="#3f84c8" stroke-width="1"/><path d="M10 7v3.6M8.2 8.8h3.6" stroke="#3f84c8" stroke-width="1.1"/></svg>
<div class="mi" style="left:512.4px;top:602.5px;color:#ffffff">Create Dataset</div>
<div class="a" style="left:494px;top:620.0px;width:170px;height:1px;background:#d6d6d6;"></div>
<svg style="left:494.8px;top:628.4px" width="13" height="13" viewBox="0 0 13 13"><g stroke="#4e9be0" stroke-width="1.4" fill="none"><path d="M2.2 9.2C1 5.5 2.6 2.4 6 2.2"/><path d="M10.8 3.8C12 7.5 10.4 10.6 7 10.8"/></g><g fill="#4e9be0"><path d="M5.2 0.2L8.6 2.3L5.4 5.2Z"/><path d="M7.8 12.8L4.4 10.7L7.6 7.8Z"/></g></svg>
<div class="mi" style="left:512.4px;top:629.5px;color:#242424">Refresh</div>
<div class="sc" style="left:603.5px;top:631.1px;width:60px;font-size:8.6px;color:#c2c2c2">F5</div>
<svg style="left:494px;top:646.4px" width="13" height="13" viewBox="0 0 13 13"><rect x="0.7" y="0.7" width="11" height="10.8" rx="1.2" fill="#3a8fd9"/><rect x="2" y="3" width="8.4" height="4" fill="#8cc4ee"/><rect x="2" y="7.6" width="5" height="2.5" fill="#fff"/><circle cx="10.2" cy="10.2" r="2.6" fill="#fff"/><circle cx="10.2" cy="10.2" r="1.7" fill="#3a8fd9"/></svg>
<div class="mi" style="left:512.4px;top:647.5px;color:#242424">Toggle result panels</div>
<div class="sc" style="left:603.5px;top:649.1px;width:60px;font-size:8.6px;color:#c2c2c2">F7</div>
<div class="a" style="left:820.8px;top:2px;width:1.2px;height:669px;background:#a9a09a;"></div>
</body></html>
